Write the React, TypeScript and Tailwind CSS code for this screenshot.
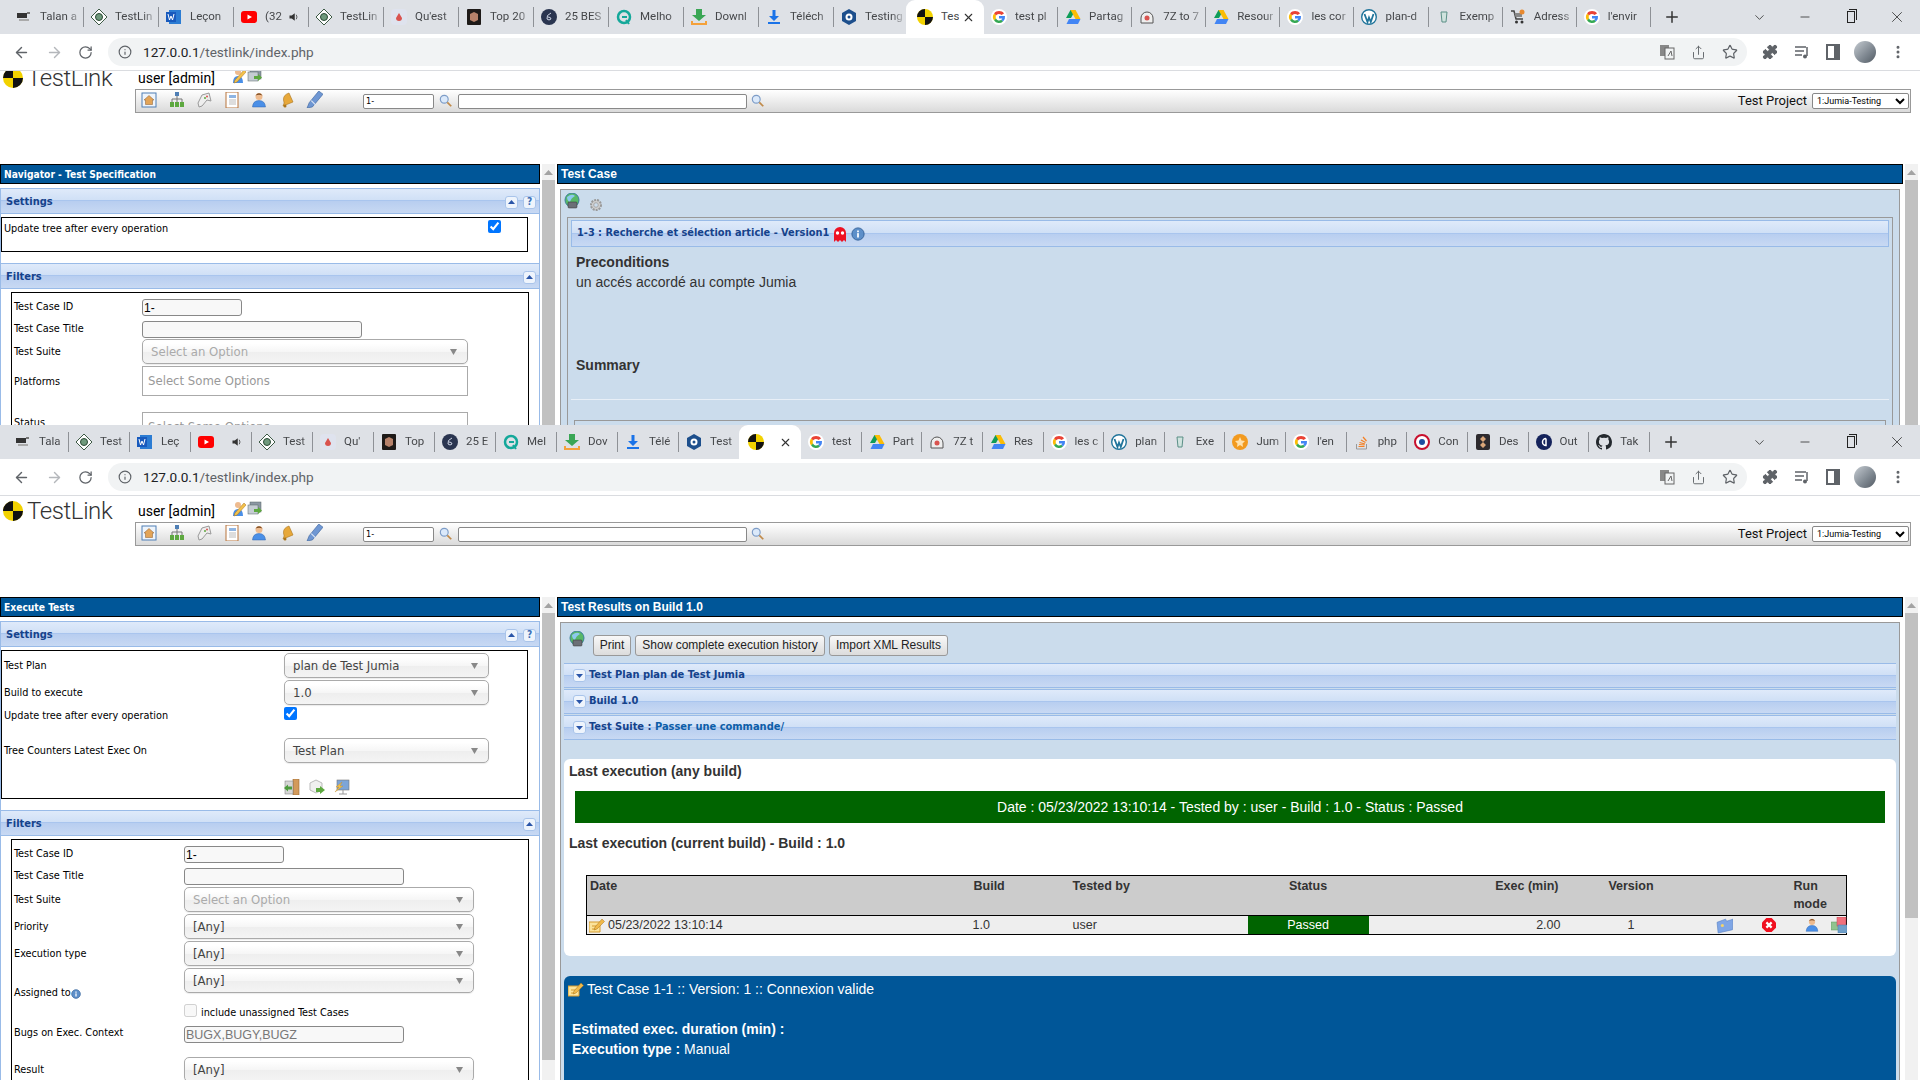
import React from 'react';
import { ArrowLeft, ArrowRight, RotateCw, Info, Star, Puzzle, Plus, X, Minus, Share, ChevronDown, MoreVertical } from 'lucide-react';

const TAHOMA = "font-['DejaVu_Sans_Condensed','DejaVu_Sans',sans-serif]";
const ARIAL = "font-['Liberation_Sans',Arial,sans-serif]";
const HEADER_BG = 'bg-[linear-gradient(#dfeafa_0%,#d0e0f6_46%,#a9c5ee_47%,#a9c5ee_50%,#b8cef0_52%,#c8d9f3_100%)]';

const Svg: React.FC<{ children: React.ReactNode; s?: number; className?: string }> = ({ children, s = 16, className }) => (
  <svg viewBox="0 0 16 16" width={s} height={s} className={`shrink-0 ${className ?? ''}`}>
    {children}
  </svg>
);

const Dummy = ({ s = 16 }: { s?: number }) => (
  <Svg s={s}>
    <circle cx="8" cy="8" r="8" fill="#f2d200" />
    <path d="M8 0A8 8 0 0 0 0 8H8ZM8 16A8 8 0 0 0 16 8H8Z" fill="#111" />
  </Svg>
);
const Talan = () => (
  <Svg>
    <rect x="1" y="4" width="10" height="5" fill="#333" />
    <rect x="11" y="3" width="3" height="2" fill="#777" />
    <rect x="3" y="10" width="10" height="2" fill="#aaa" />
  </Svg>
);
const Diamond = () => (
  <Svg>
    <path d="M8 0 16 8 8 16 0 8Z" fill="#fff" stroke="#3d5a45" strokeWidth="1" />
    <circle cx="8" cy="8" r="3.5" fill="#6f9a7c" stroke="#2b4a35" />
  </Svg>
);
const Word = () => (
  <Svg>
    <rect x="3" y="1" width="12" height="14" fill="#2b7cd3" />
    <rect x="0" y="3" width="10" height="10" fill="#185abd" />
    <path d="M2 5 3.5 11 5 7 6.500 11 8 5" fill="none" stroke="#fff" strokeWidth="1" />
  </Svg>
);
const Youtube = () => (
  <Svg>
    <rect x="0" y="2" width="16" height="12" rx="3" fill="#f00" />
    <path d="M6.500 5.500 11 8 6.500 10.500Z" fill="#fff" />
  </Svg>
);
const Speaker = () => (
  <Svg s={12}>
    <path d="M2 6H5L9 3V13L5 10H2Z" fill="#333" />
    <path d="M11 5Q13 8 11 11" stroke="#333" fill="none" />
  </Svg>
);
const Quest = () => (
  <Svg>
    <rect width="16" height="16" rx="4" fill="#dfe3ee" />
    <path d="M8 4 11 9A3 3 0 0 1 5 9Z" fill="#d9534f" />
  </Svg>
);
const TopBox = () => (
  <Svg>
    <rect x="1" width="14" height="16" rx="1" fill="#1e1a18" />
    <path d="M8 3 12 5V11L8 13 4 11V5Z" fill="#b7826a" />
  </Svg>
);
const DarkC = () => (
  <Svg>
    <circle cx="8" cy="8" r="8" fill="#2a3550" />
    <path d="M10 4Q5 6 6 10 8 12 10 10 10 8 7 8" stroke="#cfd6e6" fill="none" />
  </Svg>
);
const Melho = () => (
  <Svg>
    <circle cx="8" cy="8" r="6" fill="none" stroke="#14a89a" strokeWidth="2.500" />
    <path d="M6 8H11M10 11 13 15" stroke="#14a89a" strokeWidth="2" />
  </Svg>
);
const Downl = () => (
  <Svg>
    <path d="M5 0H11V6H15L8 12 1 6H5Z" fill="#3aa655" />
    <path d="M1 12V15H15V12" stroke="#f4a13a" strokeWidth="2" fill="none" />
  </Svg>
);
const Telech = () => (
  <Svg>
    <path d="M6.500 1H9.500V7H13L8 12 3 7H6.500Z" fill="#1a73e8" />
    <rect x="2" y="13" width="12" height="2" fill="#1a73e8" />
  </Svg>
);
const BlueRing = () => (
  <Svg>
    <path d="M8 0 15 4V12L8 16 1 12V4Z" fill="#1d4f8c" />
    <circle cx="8" cy="8" r="3.500" fill="#fff" />
    <circle cx="8" cy="8" r="1.500" fill="#1d4f8c" />
  </Svg>
);
const Google = () => (
  <Svg>
    <circle cx="8" cy="8" r="8" fill="#fff" />
    <path d="M13 4.500A6 6 0 0 0 3.100 4.500L5 6.500A3.500 3.500 0 0 1 10.500 6Z" fill="#ea4335" />
    <path d="M3.100 4.500A6 6 0 0 0 3.100 11.500L5 9.500A3.500 3.500 0 0 1 5 6.500Z" fill="#fbbc05" />
    <path d="M3.100 11.500A6 6 0 0 0 12 12.500L10.300 10.800A3.500 3.500 0 0 1 5 9.500Z" fill="#34a853" />
    <path d="M14 7H8V9.500H11.300A3 3 0 0 1 10.300 10.800L12 12.500A6 6 0 0 0 14 7Z" fill="#4285f4" />
  </Svg>
);
const Drive = () => (
  <Svg>
    <path d="M5.500 1H10.500L6 9H1Z" fill="#0f9d58" />
    <path d="M10.500 1 15.500 10H10.500L5.500 1Z" fill="#fbbc05" />
    <path d="M4 10H15.500L13 15H1.500Z" fill="#4285f4" />
  </Svg>
);
const Seven = () => (
  <Svg>
    <path d="M2 14V9A6 6 0 0 1 14 9V14Z" fill="#eee" stroke="#555" />
    <circle cx="8" cy="9" r="2.500" fill="#d9534f" />
  </Svg>
);
const Wp = () => (
  <Svg>
    <circle cx="8" cy="8" r="7.300" fill="#fff" stroke="#21759b" strokeWidth="1.400" />
    <path d="M3.500 5 6.500 13 8 8.500 9.800 13 12.500 5" stroke="#21759b" strokeWidth="1.800" fill="none" />
  </Svg>
);
const Tiny = () => (
  <Svg>
    <path d="M5 3H11L10 13H6Z" fill="#cfe3de" stroke="#5a8f86" />
  </Svg>
);
const Cart = () => (
  <Svg>
    <path d="M1 2H4L6 10H13" stroke="#444" strokeWidth="1.500" fill="none" />
    <path d="M4.500 4H12V8H5.500Z" fill="#888" />
    <circle cx="12" cy="3" r="2.500" fill="#e8892f" />
    <circle cx="6.500" cy="13" r="1.500" fill="#333" />
    <circle cx="12" cy="13" r="1.500" fill="#333" />
  </Svg>
);
const OrangeStar = () => (
  <Svg>
    <circle cx="8" cy="8" r="8" fill="#f29a1f" />
    <path d="M8 3 9.500 6.500 13 7 10.500 9.500 11 13 8 11 5 13 5.500 9.500 3 7 6.500 6.500Z" fill="#ffe2ae" />
  </Svg>
);
const StackO = () => (
  <Svg>
    <path d="M2.500 10V15H12.500V10" stroke="#999" fill="none" />
    <path d="M4.500 12.500H10.500M5 10.500 10.500 11M5.500 8.500 11 10M7 6 11.500 8.500M9 3 12.500 7" stroke="#f48024" strokeWidth="1.200" />
  </Svg>
);
const Target = () => (
  <Svg>
    <circle cx="8" cy="8" r="7" fill="#fff" stroke="#c8102e" strokeWidth="2" />
    <circle cx="8" cy="8" r="3" fill="#1f4ea1" />
  </Svg>
);
const DarkSq = () => (
  <Svg>
    <rect x="1" width="14" height="16" rx="2" fill="#2d2a2e" />
    <path d="M8 2 11 5 8 8 5 5ZM8 8 11 11 8 14 5 11Z" fill="#d9a679" />
  </Svg>
);
const NavyC = () => (
  <Svg>
    <circle cx="8" cy="8" r="8" fill="#14225b" />
    <path d="M10 4.500A3.500 3.500 0 1 0 10 11.500V4.500" stroke="#fff" strokeWidth="1.500" fill="none" />
  </Svg>
);
const GitHub = () => (
  <Svg>
    <path
      d="M8 0C3.600 0 0 3.600 0 8c0 3.500 2.300 6.500 5.500 7.600.4.100.5-.2.500-.4v-1.400c-2.200.5-2.700-1-2.700-1-.4-.9-.9-1.200-.9-1.200-.7-.5.100-.5.100-.5.800.1 1.200.8 1.200.8.700 1.200 1.900.9 2.300.7.100-.5.300-.9.500-1.100-1.800-.2-3.600-.9-3.600-4 0-.9.300-1.600.8-2.100-.1-.2-.4-1 .1-2.100 0 0 .7-.2 2.200.8a7.500 7.500 0 0 1 4 0c1.500-1 2.200-.8 2.200-.8.400 1.100.2 1.900.1 2.100.5.600.8 1.300.8 2.100 0 3.100-1.900 3.700-3.700 3.900.3.300.6.700.6 1.500v2.200c0 .2.100.5.600.4A8 8 0 0 0 16 8c0-4.400-3.600-8-8-8Z"
      fill="#24292e"
    />
  </Svg>
);

const FAVICONS: Record<string, React.ReactNode> = {
  talan: <Talan />, diamond: <Diamond />, word: <Word />, yt: <Youtube />, quest: <Quest />, top: <TopBox />,
  dark: <DarkC />, melho: <Melho />, downl: <Downl />, telech: <Telech />, ring: <BlueRing />, g: <Google />,
  drive: <Drive />, seven: <Seven />, wp: <Wp />, tiny: <Tiny />, cart: <Cart />, star: <OrangeStar />,
  so: <StackO />, target: <Target />, darksq: <DarkSq />, navy: <NavyC />, gh: <GitHub />,
};

// page artwork, roughly the old TestLink icon set
const HomeIcon = () => (
  <Svg>
    <rect x="1" y="1" width="14" height="14" fill="#eef4fb" stroke="#4f7fb5" />
    <path d="M3 8 8 3.500 13 8H11.500V12.500H4.500V8Z" fill="#e2a458" stroke="#8a5b2a" strokeWidth=".5" />
  </Svg>
);
const TreeIcon = () => (
  <Svg>
    <rect x="6" y="0" width="4" height="4" fill="#4f7fb5" />
    <path d="M8 4V7M3 10V7H13V10M8 7V10" stroke="#777" fill="none" />
    <rect x="1" y="10" width="4" height="5" fill="#5da83f" />
    <rect x="6" y="10" width="4" height="5" fill="#5da83f" />
    <rect x="11" y="10" width="4" height="5" fill="#5da83f" />
  </Svg>
);
const PadIcon = () => (
  <Svg>
    <path d="M2 11 6 3 13 1 15 9 11 8 6 14 3 15Z" fill="#eeeeee" stroke="#999" />
    <circle cx="11" cy="4.500" r="1" fill="#d9534f" />
    <circle cx="9" cy="6" r="1" fill="#5da83f" />
  </Svg>
);
const BookIcon = () => (
  <Svg>
    <rect x="2" y="0" width="12" height="16" fill="#fff" stroke="#b8743c" />
    <rect x="5" y="3" width="7" height="3" fill="#8fb5e3" />
    <path d="M5 8H12M5 10H12M5 12H12" stroke="#bbb" />
  </Svg>
);
const UserIcon = () => (
  <Svg>
    <circle cx="8" cy="4.500" r="3.500" fill="#eebb8f" />
    <path d="M4.500 3.500Q8 -1 11.500 3.500Q8 2 4.500 3.500Z" fill="#7a4a22" />
    <path d="M1.500 15Q2 8.500 8 8.500T14.500 15Z" fill="#4a8fe7" stroke="#2c62ad" strokeWidth=".5" />
  </Svg>
);
const BellIcon = () => (
  <Svg>
    <path d="M10 1 14 10 4 14Q6 11 4.500 8 4 3 10 1Z" fill="#e7a83a" stroke="#a9741c" strokeWidth=".6" />
    <circle cx="6" cy="14" r="1.500" fill="#a9741c" />
  </Svg>
);
const PenIcon = () => (
  <Svg s={17}>
    <path d="M12 0 16 3 6 15 1 16 3 11Z" fill="#6f97d3" stroke="#3d659f" strokeWidth=".6" />
    <path d="M5 9 9 13" stroke="#dce7f6" />
  </Svg>
);
const Magnifier = () => (
  <Svg s={14}>
    <circle cx="6" cy="6" r="4.500" fill="#dbe9fa" stroke="#7d9cc7" strokeWidth="1.300" />
    <path d="M9.500 9.500 14 14" stroke="#c08a4a" strokeWidth="2" />
  </Svg>
);
const EditUser = () => (
  <Svg>
    <circle cx="7" cy="4" r="3" fill="#eebb8f" />
    <path d="M2 15Q2 8 7 8T12 15Z" fill="#4a8fe7" />
    <path d="M13 2 15 4 6 14 3 15 4 12Z" fill="#f3c14b" stroke="#a9741c" strokeWidth=".5" />
  </Svg>
);
const Screens = () => (
  <Svg>
    <rect x="3" y="1" width="11" height="10" fill="#8c97a3" stroke="#566" strokeWidth=".5" />
    <rect x="1" y="4" width="10" height="9" fill="#c5ccd3" stroke="#566" strokeWidth=".5" />
    <path d="M7 8H11V6L15 9.500 11 13V11H7Z" fill="#5da83f" />
  </Svg>
);
const Globe = () => (
  <Svg>
    <circle cx="8" cy="7" r="7" fill="#58b868" stroke="#3a7f9c" />
    <path d="M3 4Q8 0 11 3 7 5 6 9 3 8 3 4Z" fill="#8cc9ee" />
    <rect x="4" y="9" width="9" height="6" rx="1" fill="#6b6f76" stroke="#333" strokeWidth=".5" />
  </Svg>
);
const Gear = () => (
  <Svg>
    <circle cx="8" cy="8" r="5" fill="#cfcfcf" stroke="#999" strokeWidth="2" strokeDasharray="2 1" />
    <circle cx="8" cy="8" r="2.300" fill="#cbdcec" stroke="#aaa" />
  </Svg>
);
const Ghost = () => (
  <Svg>
    <path d="M2 16V7A6 6 0 0 1 14 7V16L12 14 10 16 8 14 6 16 4 14Z" fill="#ee1122" />
    <circle cx="5.500" cy="7" r="1.700" fill="#fff" />
    <circle cx="10.500" cy="7" r="1.700" fill="#fff" />
  </Svg>
);
const InfoDot = ({ s = 14 }: { s?: number }) => (
  <Svg s={s}>
    <circle cx="8" cy="8" r="7" fill="#5d8fc9" stroke="#2f5e96" />
    <rect x="7" y="7" width="2" height="5" fill="#fff" />
    <rect x="7" y="4" width="2" height="2" fill="#fff" />
  </Svg>
);
const DoorIcon = () => (
  <Svg>
    <rect x="9" y="0" width="6" height="16" fill="#d39a5b" stroke="#9a6a33" strokeWidth=".6" />
    <rect x="1" y="2" width="8" height="13" fill="#d6d6d6" stroke="#777" strokeWidth=".5" />
    <path d="M0 9 4 5.500V7.500H8V10.500H4V12.500Z" fill="#4e9c3e" />
  </Svg>
);
const BoxArrow = () => (
  <Svg>
    <path d="M1 4 7 1 13 4V11L7 14 1 11Z" fill="#f0f0f0" stroke="#bbb" />
    <path d="M7 9H11V7L16 11 11 15V13H7Z" fill="#5da83f" />
  </Svg>
);
const ScreenBolt = () => (
  <Svg>
    <rect x="3" y="1" width="12" height="10" fill="#7da5d8" stroke="#777" strokeWidth=".6" />
    <path d="M5 15H13M9 11V15" stroke="#999" />
    <path d="M8 3 2 8H5L1 13 9 7H6Z" fill="#f3c14b" stroke="#c08a2a" strokeWidth=".4" />
  </Svg>
);
const PencilDoc = () => (
  <Svg>
    <path d="M0 5H11V15H0Z" fill="#fbe39b" stroke="#d69b2c" />
    <path d="M3 9H8M3 12H7" stroke="#d69b2c" />
    <path d="M13 2 15.500 4.500 8 12 5 13 6 10Z" fill="#f0b94a" stroke="#a9741c" strokeWidth=".5" />
  </Svg>
);
const Folder = () => (
  <Svg s={17}>
    <path d="M1 5 9 2 10 4 16 2 15.500 12 2 15Z" fill="#7fa6e6" stroke="#5a82c4" strokeWidth=".6" />
    <circle cx="6" cy="8" r="1.500" fill="#f3d36b" />
  </Svg>
);
const RedX = () => (
  <Svg s={14}>
    <path d="M5 0H11L16 5V11L11 16H5L0 11V5Z" fill="#f01020" />
    <path d="M5 5 11 11M11 5 5 11" stroke="#fff" strokeWidth="2.500" />
  </Svg>
);
const Cubes = () => (
  <Svg>
    <rect x="0" y="5" width="8" height="8" fill="#8fc48f" stroke="#5d965d" strokeWidth=".5" />
    <rect x="6" y="0" width="9" height="9" fill="#f0707c" stroke="#c04a55" strokeWidth=".5" />
    <rect x="7" y="8" width="9" height="8" fill="#6f9fca" stroke="#4a7ba6" strokeWidth=".5" />
  </Svg>
);

type TabData = { icon: string; label: string; sound?: boolean };

const Tab: React.FC<{ tab: TabData; width: string; sep?: boolean }> = ({ tab, width, sep = true }) => (
  <div className={`${width} h-[34px] shrink-0 flex items-center`}>
    <div className={`w-full h-[20px] flex items-center pl-[7px] overflow-hidden ${sep ? 'border-r border-[#8e9196]' : ''}`}>
      {FAVICONS[tab.icon]}
      <span className="ml-[8px] flex-1 min-w-0 whitespace-nowrap overflow-hidden text-[11.500px] text-[#45474a] [mask-image:linear-gradient(90deg,#000_65%,transparent_100%)]">
        {tab.label}
      </span>
      {tab.sound && <span className="mr-[8px]"><Speaker /></span>}
    </div>
  </div>
);

const ActiveTab: React.FC<{ width: string; label: string; pad: string }> = ({ width, label, pad }) => (
  <div className={`${width} ${pad} h-[34px] shrink-0 bg-white rounded-t-[9px] flex items-center`}>
    <Dummy />
    <span className="ml-[8px] max-w-[22px] overflow-hidden whitespace-nowrap text-[11.500px] text-[#45474a]">{label}</span>
    <X size={13} strokeWidth={2} className="ml-auto mr-[9px] text-[#333]" />
  </div>
);

const Chrome: React.FC<{ before: TabData[]; after: TabData[]; tabW: string; activeW: string; activeLabel: string; activePad: string; lead: string; lastBeforeW: string; afterW: string }> = ({
  before, after, tabW, activeW, activeLabel, activePad, lead, lastBeforeW, afterW,
}) => (
  <div className="font-['Roboto',sans-serif]">
    <div className={`h-[34px] bg-[#dee1e6] flex ${lead}`}>
      {before.map((t, i) =>
        i === before.length - 1 ? (
          <Tab key={i} tab={t} width={lastBeforeW} sep={false} />
        ) : (
          <Tab key={i} tab={t} width={tabW} />
        ),
      )}
      <ActiveTab width={activeW} label={activeLabel} pad={activePad} />
      {after.map((t, i) => (
        <Tab key={i} tab={t} width={afterW} />
      ))}
      <div className="ml-[7px] w-[28px] flex items-center justify-center">
        <Plus size={18} strokeWidth={2} className="text-[#333]" />
      </div>
      <div className="ml-auto flex text-[#222]">
        <div className="w-[46px] flex items-center justify-center"><ChevronDown size={15} strokeWidth={1.2} /></div>
        <div className="w-[46px] flex items-center justify-center"><Minus size={14} strokeWidth={1.3} /></div>
        <div className="w-[46px] flex items-center justify-center">
          <div className="relative w-[8px] h-[12px] border border-[#222]">
            <div className="absolute -top-[3px] left-[1px] w-[8px] h-[11px] border-t border-r border-[#222]" />
          </div>
        </div>
        <div className="w-[46px] flex items-center justify-center"><X size={18} strokeWidth={1} /></div>
      </div>
    </div>
    <div className="h-[37px] bg-white border-b border-[#dadce0] flex items-center text-[#5f6368]">
      <div className="w-[34px] ml-[4px] flex justify-center"><ArrowLeft size={17} strokeWidth={2} /></div>
      <div className="w-[33px] flex justify-center text-[#b4b7bb]"><ArrowRight size={17} strokeWidth={2} /></div>
      <div className="w-[29px] flex justify-center"><RotateCw size={15} strokeWidth={2} /></div>
      <div className="ml-[8px] w-[1639px] h-[28px] rounded-full bg-[#f1f3f4] flex items-center">
        <Info size={14} strokeWidth={2} className="ml-[10px]" />
        <span className="ml-[11px] text-[13.600px] text-[#202124]">
          127.0.0.1<span className="text-[#5f6368]">/testlink/index.php</span>
        </span>
        <div className="ml-auto flex items-center gap-[16px] mr-[9px]">
          <svg viewBox="0 0 16 16" width="16" height="16">
            <rect x="1" y="1" width="9" height="11" fill="#888" />
            <rect x="6" y="4" width="9" height="11" fill="#f1f3f4" stroke="#666" />
            <path d="M9 12 12 7 13 12" stroke="#666" fill="none" />
          </svg>
          <Share size={15} strokeWidth={1.5} />
          <Star size={16} strokeWidth={1.8} />
        </div>
      </div>
      <div className="ml-[15px] flex items-center">
        <Puzzle size={16} fill="#5f6368" strokeWidth={1.5} />
        <svg viewBox="0 0 16 16" width="16" height="16" className="ml-[16px]">
          <path d="M1 3H12M1 7H10M1 11H8" stroke="#5f6368" strokeWidth="1.500" />
          <path d="M13 3V12" stroke="#5f6368" strokeWidth="1.500" />
          <circle cx="11" cy="12.500" r="2" fill="#5f6368" />
        </svg>
        <div className="ml-[16px] w-[14px] h-[16px] border-[2px] border-[#5f6368] border-r-[6px]" />
        <div className="ml-[14px] w-[22px] h-[22px] rounded-full bg-[linear-gradient(135deg,#c6ccd2,#7d868f_60%,#525a63)]" />
        <MoreVertical size={16} strokeWidth={2.5} className="ml-[14px]" />
      </div>
    </div>
  </div>
);

const PageHeader = () => (
  <div className={`h-[101px] ${TAHOMA}`}>
    <div className="h-[26px] pt-[4px] flex items-center">
      <span className="ml-[3px]"><Dummy s={20} /></span>
      <span className="ml-[4px] w-[111px] font-['Roboto',sans-serif] font-light text-[24px] leading-none text-[#333] tracking-[-0.4px]">TestLink</span>
      <span className="w-[93px] font-['Roboto',sans-serif] text-[14px] text-black whitespace-nowrap">user [admin]</span>
      <span className="-mt-[4px] flex">
        <EditUser />
        <Screens />
      </span>
    </div>
    <div className="ml-[135px] mr-[9px] h-[24px] border border-[#999] bg-[linear-gradient(#fff,#f4f4f4_30%,#dadada)] flex items-center">
      <div className="-mt-[3px] flex items-center gap-[11.500px] pl-[5px] w-[227px]">
        <HomeIcon />
        <TreeIcon />
        <PadIcon />
        <BookIcon />
        <UserIcon />
        <BellIcon />
        <PenIcon />
      </div>
      <input readOnly value="1-" className="w-[71px] h-[15px] rounded-[2px] border border-[#888] bg-white px-[2px] text-[9px] leading-none" />
      <span className="ml-[5px]"><Magnifier /></span>
      <input readOnly className="ml-[5px] w-[289px] h-[15px] rounded-[2px] border border-[#888] bg-white" />
      <span className="ml-[4px]"><Magnifier /></span>
      <span className="ml-auto font-['Roboto',sans-serif] text-[13px] text-[#111]">Test Project</span>
      <select className="ml-[5px] mr-[1px] w-[97px] h-[16px] rounded-[2px] border border-[#888] bg-white text-[9px] font-['Roboto',sans-serif] text-black">
        <option>1:Jumia-Testing</option>
      </select>
    </div>
  </div>
);

const TitleBar: React.FC<{ text: string; className?: string }> = ({ text, className }) => (
  <div className={`h-[20px] bg-[#005698] border border-black flex items-center pl-[3px] text-white font-bold ${className ?? ''}`}>{text}</div>
);

const ToggleBtn: React.FC<{ dir?: 'up' | 'down'; label?: string }> = ({ dir = 'up', label }) => (
  <div className="w-[13px] h-[13px] rounded-[3px] bg-[#eef4fc] border border-[#a9c4ea] flex items-center justify-center shrink-0">
    {label ? (
      <span className="text-[10px] leading-none font-bold text-[#3a6db5]">{label}</span>
    ) : (
      <svg width="7" height="4" viewBox="0 0 7 4">
        <path d={dir === 'up' ? 'M0 4 3.500 0 7 4Z' : 'M0 0 3.500 4 7 0Z'} fill="#2a55a8" />
      </svg>
    )}
  </div>
);

const PanelHeader: React.FC<{ text: string; help?: boolean; className?: string }> = ({ text, help, className }) => (
  <div className={`h-[26px] pt-[2px] ${HEADER_BG} border-y border-[#99bbe8] flex items-center pl-[5px] pr-[3px] gap-[5px] ${className ?? ''}`}>
    <span className="mr-auto pt-[1px] text-[11px] font-bold text-[#15428b]">{text}</span>
    <ToggleBtn />
    {help && <ToggleBtn label="?" />}
  </div>
);

const Chosen: React.FC<{ text: string; muted?: boolean; width: string; className?: string }> = ({ text, muted, width, className }) => (
  <div className={`${width} h-[25px] rounded-[5px] border border-[#aaa] bg-[linear-gradient(#fff_15%,#f6f6f6_50%,#eeeeee_52%,#f4f4f4)] shadow-[0_1px_1px_rgba(0,0,0,0.08)] flex items-center pl-[8px] pr-[10px] text-[13px] shrink-0 ${muted ? 'text-[#aaa]' : 'text-[#444]'} ${className ?? ''}`}>
    <span className="flex-1 whitespace-nowrap">{text}</span>
    <svg width="7" height="6" viewBox="0 0 7 6" className="shrink-0">
      <path d="M0 0H7L3.500 6Z" fill="#888" />
    </svg>
  </div>
);

const SmallInput: React.FC<{ value?: string; width: string; placeholder?: string; className?: string }> = ({ value, width, placeholder, className }) => (
  <input
    readOnly
    value={value ?? ''}
    placeholder={placeholder}
    className={`${width} h-[17px] rounded-[3px] border border-[#888] bg-[#f8f8f8] px-[1px] text-[12px] text-black placeholder:text-[#777] placeholder:text-[12.500px] ${ARIAL} ${className ?? ''}`}
  />
);

const MultiBox: React.FC<{ text: string; className?: string }> = ({ text, className }) => (
  <div className={`w-[326px] h-[30px] border border-[#aaa] bg-white flex items-center pl-[5px] text-[13px] text-[#999] ${className ?? ''}`}>{text}</div>
);

const Label: React.FC<{ text: string; width: string; className?: string; children?: React.ReactNode }> = ({ text, width, className, children }) => (
  <div className={`${width} shrink-0 flex items-center whitespace-nowrap pt-[2px] text-[10.800px] text-black ${className ?? ''}`}>
    {text}
    {children}
  </div>
);

const ScrollBar: React.FC<{ thumb: string; className?: string }> = ({ thumb, className }) => (
  <div className={`w-[13px] h-full shrink-0 bg-[#f1f1f1] ${className ?? ''}`}>
    <div className="h-[16px] flex items-center justify-center">
      <svg width="9" height="5" viewBox="0 0 9 5">
        <path d="M0 5 4.500 0 9 5Z" fill="#a3a3a3" />
      </svg>
    </div>
    <div className={`${thumb} bg-[#c1c1c1]`} />
  </div>
);

const Navigator = () => (
  <>
    <TitleBar text="Navigator - Test Specification" className="pt-[1px] text-[10.200px]" />
    <div className="mt-[4px] border-x border-[#99bbe8] h-[300px]">
      <PanelHeader text="Settings" help />
      <div className="mt-[3px] w-[527px] h-[35px] border border-black flex items-start">
        <Label text="Update tree after every operation" width="w-[486px]" className="pl-[2px] h-[20px]" />
        <input type="checkbox" defaultChecked readOnly className="mt-[2px] w-[13px] h-[13px] m-0" />
      </div>
      <PanelHeader text="Filters" className="mt-[11px]" />
      <div className="mt-[3px] ml-[10px] w-[518px] h-[200px] border border-black">
        <div className="mt-[6px] flex items-start">
          <Label text="Test Case ID" width="w-[130px]" className="pl-[2px] h-[14px]" />
          <SmallInput value="1-" width="w-[100px]" />
        </div>
        <div className="mt-[5px] flex items-start">
          <Label text="Test Case Title" width="w-[130px]" className="pl-[2px] h-[14px]" />
          <SmallInput width="w-[220px]" />
        </div>
        <div className="mt-[1px] flex items-center">
          <Label text="Test Suite" width="w-[130px]" className="pl-[2px]" />
          <Chosen text="Select an Option" muted width="w-[326px]" />
        </div>
        <div className="mt-[2px] flex items-center">
          <Label text="Platforms" width="w-[130px]" className="pl-[2px]" />
          <MultiBox text="Select Some Options" />
        </div>
        <div className="mt-[16px] flex items-start">
          <Label text="Status" width="w-[130px]" className="pl-[2px] h-[20px]" />
          <MultiBox text="Select Some Options" />
        </div>
      </div>
    </div>
  </>
);

const ExecNavigator = () => (
  <>
    <TitleBar text="Execute Tests" className="pt-[1px] text-[10.200px]" />
    <div className="mt-[4px] border-x border-[#99bbe8] h-[470px]">
      <PanelHeader text="Settings" help />
      <div className="mt-[3px] w-[527px] h-[149px] border border-black pt-[2px]">
        <div className="flex items-center">
          <Label text="Test Plan" width="w-[282px]" className="pl-[2px]" />
          <Chosen text="plan de Test Jumia" width="w-[205px]" />
        </div>
        <div className="mt-[2px] flex items-center">
          <Label text="Build to execute" width="w-[282px]" className="pl-[2px]" />
          <Chosen text="1.0" width="w-[205px]" />
        </div>
        <div className="mt-[2px] flex items-start h-[31px]">
          <Label text="Update tree after every operation" width="w-[282px]" className="pl-[2px] h-[17px]" />
          <input type="checkbox" defaultChecked readOnly className="w-[13px] h-[13px] m-0" />
        </div>
        <div className="flex items-center">
          <Label text="Tree Counters Latest Exec On" width="w-[282px]" className="pl-[2px]" />
          <Chosen text="Test Plan" width="w-[205px]" />
        </div>
        <div className="mt-[16px] pl-[282px] flex gap-[9px]">
          <DoorIcon />
          <BoxArrow />
          <ScreenBolt />
        </div>
      </div>
      <PanelHeader text="Filters" className="mt-[11px]" />
      <div className="mt-[3px] ml-[10px] w-[518px] h-[260px] border border-black">
        <div className="mt-[6px] flex items-start">
          <Label text="Test Case ID" width="w-[172px]" className="pl-[2px] h-[15px]" />
          <SmallInput value="1-" width="w-[100px]" />
        </div>
        <div className="mt-[5px] flex items-start">
          <Label text="Test Case Title" width="w-[172px]" className="pl-[2px] h-[15px]" />
          <SmallInput width="w-[220px]" />
        </div>
        <div className="mt-[2px] flex items-center">
          <Label text="Test Suite" width="w-[172px]" className="pl-[2px]" />
          <Chosen text="Select an Option" muted width="w-[290px]" />
        </div>
        <div className="mt-[2px] flex items-center">
          <Label text="Priority" width="w-[172px]" className="pl-[2px]" />
          <Chosen text="[Any]" width="w-[290px]" />
        </div>
        <div className="mt-[2px] flex items-center">
          <Label text="Execution type" width="w-[172px]" className="pl-[2px]" />
          <Chosen text="[Any]" width="w-[290px]" />
        </div>
        <div className="mt-[2px] flex items-center">
          <Label text="Assigned to" width="w-[172px]" className="pl-[2px]">
            <InfoDot s={10} />
          </Label>
          <div>
            <Chosen text="[Any]" width="w-[290px]" />
            <div className="mt-[11px] h-[13px] flex items-start gap-[4px] text-[10.800px] leading-[13px] text-black">
              <input type="checkbox" disabled className="w-[13px] h-[13px] m-0" />
              <span className="mt-[2px]">include unassigned Test Cases</span>
            </div>
          </div>
        </div>
        <div className="mt-[9px] flex items-start">
          <Label text="Bugs on Exec. Context" width="w-[172px]" className="pl-[2px] h-[13px]" />
          <SmallInput placeholder="BUGX,BUGY,BUGZ" width="w-[220px]" />
        </div>
        <div className="mt-[14px] flex items-center">
          <Label text="Result" width="w-[172px]" className="pl-[2px]" />
          <Chosen text="[Any]" width="w-[290px]" />
        </div>
      </div>
    </div>
  </>
);

const RightPanelWrap: React.FC<{ title: string; children: React.ReactNode }> = ({ title, children }) => (
  <>
    <TitleBar text={title} className={`text-[12px] ${ARIAL}`} />
    <div className={`mt-[5px] ml-[3px] w-[1340px] border border-[#999] bg-[#cbdcec] ${ARIAL} text-[#333] h-[600px]`}>{children}</div>
  </>
);

const TestCasePanel = () => (
  <RightPanelWrap title="Test Case">
    <div className="h-[27px] pl-[3px] pt-[3px] flex items-start gap-[8px]">
      <Globe />
      <span className="mt-[4px]"><Gear /></span>
    </div>
    <div className="mx-[6px] border border-[#999] px-[3px] pt-[2px] h-[400px]">
      <div className={`h-[27px] ${HEADER_BG} border border-[#99bbe8] flex items-center pl-[5px] gap-[3px] text-[10.900px] font-bold text-[#15428b] ${TAHOMA}`}>
        1-3 : Recherche et sélection article - Version1
        <Ghost />
        <InfoDot />
      </div>
      <div className="pl-[5px] text-[14px] leading-[20px]">
        <div className="mt-[5px] font-bold">Preconditions</div>
        <div>un accés accordé au compte Jumia</div>
        <div className="mt-[63px] font-bold">Summary</div>
      </div>
      <div className="mt-[24px] h-px bg-[#e8eff7]" />
      <div className="mt-[20px] mx-[3px] h-[40px] border border-[#999]" />
    </div>
  </RightPanelWrap>
);

const AccordionRow: React.FC<{ children: React.ReactNode; className?: string }> = ({ children, className }) => (
  <div className={`mx-[3px] h-[25px] ${HEADER_BG} border-y border-[#99bbe8] flex items-center pl-[9px] gap-[3px] text-[11px] font-bold text-[#15428b] ${TAHOMA} ${className ?? ''}`}>
    <ToggleBtn dir="down" />
    <span>{children}</span>
  </div>
);

const Btn: React.FC<{ text: string; width: string }> = ({ text, width }) => (
  <button className={`${width} h-[21px] rounded-[3px] border border-[#999] bg-[linear-gradient(#f8f8f8,#dcdcdc)] text-[12px] leading-[17px] text-[#222]`}>{text}</button>
);

const ResultsPanel = () => (
  <RightPanelWrap title="Test Results on Build 1.0">
    <div className="h-[40px] pl-[8px] flex items-start">
      <span className="mt-[8px]"><Globe /></span>
      <div className="ml-[8px] mt-[12px] flex gap-[4px]">
        <Btn text="Print" width="w-[38px]" />
        <Btn text="Show complete execution history" width="w-[190px]" />
        <Btn text="Import XML Results" width="w-[119px]" />
      </div>
    </div>
    <AccordionRow>Test Plan plan de Test Jumia</AccordionRow>
    <AccordionRow className="mt-[1px]">Build 1.0</AccordionRow>
    <AccordionRow className="mt-[1px]">
      Test Suite : <span className="text-[#0d5ea8]">Passer une commande/</span>
    </AccordionRow>
    <div className="mx-[3px] mt-[19px] h-[197px] bg-white rounded-[6px] overflow-hidden">
      <div className="pl-[5px] pt-[3px] text-[14px] leading-[18px] font-bold">Last execution (any build)</div>
      <div className="mt-[11px] ml-[11px] w-[1310px] h-[32px] bg-[#006400] text-white text-[14px] flex items-center justify-center">
        Date : 05/23/2022 13:10:14 - Tested by : user - Build : 1.0 - Status : Passed
      </div>
      <div className="pl-[5px] mt-[11px] text-[14px] leading-[18px] font-bold">Last execution (current build) - Build : 1.0</div>
      <table className="mt-[23px] ml-[22px] w-[1260px] table-fixed border-collapse border border-black text-[12.500px] leading-[18px]">
        <colgroup>
          <col className="w-[385px]" />
          <col className="w-[99px]" />
          <col className="w-[177px]" />
          <col className="w-[121px]" />
          <col className="w-[194px]" />
          <col className="w-[137px]" />
          <col className="w-[48px]" />
          <col className="w-[42px]" />
          <col className="w-[57px]" />
        </colgroup>
        <thead>
          <tr className="h-[40px] bg-[#cccccc] border-b border-black align-top font-bold">
            <th className="pl-[3px] pt-[1px] text-left font-bold">Date</th>
            <th className="pl-[2px] pt-[1px] text-left font-bold">Build</th>
            <th className="pl-[2px] pt-[1px] text-left font-bold">Tested by</th>
            <th className="pt-[1px] text-center font-bold">Status</th>
            <th className="pr-[4px] pt-[1px] text-right font-bold">Exec (min)</th>
            <th className="pt-[1px] text-center font-bold">Version</th>
            <th />
            <th />
            <th className="pl-[4px] pt-[1px] text-left font-bold leading-[18px]">Run mode</th>
          </tr>
        </thead>
        <tbody>
          <tr className="h-[18px] bg-[#eeeeee]">
            <td className="pl-[2px]">
              <span className="flex items-center gap-[3px]"><PencilDoc />05/23/2022 13:10:14</span>
            </td>
            <td className="pl-[1px]">1.0</td>
            <td className="pl-[2px]">user</td>
            <td className="bg-[#006400] text-white text-center">Passed</td>
            <td className="pr-[2px] text-right">2.00</td>
            <td className="text-center">1</td>
            <td className="pl-[16px]"><Folder /></td>
            <td className="pl-[14px]"><RedX /></td>
            <td className="pl-[14px]">
              <span className="flex items-center gap-[11px]"><span className="scale-90"><UserIcon /></span><Cubes /></span>
            </td>
          </tr>
        </tbody>
      </table>
    </div>
    <div className="mx-[3px] mt-[20px] h-[200px] bg-[#005698] rounded-t-[6px] text-white text-[14px] leading-[20px] pt-[3px]">
      <div className="pl-[4px] flex items-center gap-[3px]"><PencilDoc />Test Case 1-1 :: Version: 1 :: Connexion valide</div>
      <div className="mt-[20px] pl-[8px] font-bold">Estimated exec. duration (min) :</div>
      <div className="pl-[8px]"><b>Execution type :</b> Manual</div>
    </div>
  </RightPanelWrap>
);

const Columns: React.FC<{ left: React.ReactNode; right: React.ReactNode; height: string; leftThumb: string; rightThumb: string }> = ({ left, right, height, leftThumb, rightThumb }) => (
  <div className={`flex ${height} overflow-hidden ${TAHOMA}`}>
    <div className="w-[540px] shrink-0">{left}</div>
    <ScrollBar thumb={leftThumb} className="ml-[2px]" />
    <div className="ml-[2px] w-[1346px] shrink-0">{right}</div>
    <ScrollBar thumb={rightThumb} className="ml-[2px]" />
  </div>
);

const tabsA: TabData[] = [
  { icon: 'talan', label: 'Talan a' }, { icon: 'diamond', label: 'TestLin' }, { icon: 'word', label: 'Leçon' },
  { icon: 'yt', label: '(32', sound: true }, { icon: 'diamond', label: 'TestLin' }, { icon: 'quest', label: "Qu'est" },
  { icon: 'top', label: 'Top 20' }, { icon: 'dark', label: '25 BES' }, { icon: 'melho', label: 'Melho' },
  { icon: 'downl', label: 'Downl' }, { icon: 'telech', label: 'Téléch' }, { icon: 'ring', label: 'Testing' },
];
const tabsAfterA: TabData[] = [
  { icon: 'g', label: 'test pl' }, { icon: 'drive', label: 'Partag' }, { icon: 'seven', label: '7Z to 7' },
  { icon: 'drive', label: 'Resour' }, { icon: 'g', label: 'les cor' }, { icon: 'wp', label: 'plan-d' },
  { icon: 'tiny', label: 'Exemp' }, { icon: 'cart', label: 'Adress' }, { icon: 'g', label: "l'envir" },
];
const tabsB: TabData[] = [
  { icon: 'talan', label: 'Tala' }, { icon: 'diamond', label: 'Test' }, { icon: 'word', label: 'Leç' },
  { icon: 'yt', label: '', sound: true }, { icon: 'diamond', label: 'Test' }, { icon: 'quest', label: "Qu'" },
  { icon: 'top', label: 'Top' }, { icon: 'dark', label: '25 E' }, { icon: 'melho', label: 'Mel' },
  { icon: 'downl', label: 'Dov' }, { icon: 'telech', label: 'Télé' }, { icon: 'ring', label: 'Test' },
];
const tabsAfterB: TabData[] = [
  { icon: 'g', label: 'test' }, { icon: 'drive', label: 'Part' }, { icon: 'seven', label: '7Z t' },
  { icon: 'drive', label: 'Res' }, { icon: 'g', label: 'les c' }, { icon: 'wp', label: 'plan' },
  { icon: 'tiny', label: 'Exe' }, { icon: 'star', label: 'Jum' }, { icon: 'g', label: "l'en" },
  { icon: 'so', label: 'php' }, { icon: 'target', label: 'Con' }, { icon: 'darksq', label: 'Des' },
  { icon: 'navy', label: 'Out' }, { icon: 'gh', label: 'Tak' },
];

export default function App() {
  return (
    <div className="w-[1920px] h-[1080px] overflow-hidden bg-white">
      <section className="h-[425px] overflow-hidden">
        <Chrome before={tabsA} after={tabsAfterA} tabW="w-[75px]" lastBeforeW="w-[72px]" activeW="w-[78px]" afterW="w-[74.100px]" activeLabel="Tes" activePad="pl-[11px]" lead="pl-[9px]" />
        <div className="h-[354px] overflow-hidden">
          <div className="-mt-[8px]">
            <PageHeader />
            <Columns left={<Navigator />} right={<TestCasePanel />} height="h-[261px]" leftThumb="h-[400px]" rightThumb="h-[400px]" />
          </div>
        </div>
      </section>
      <section className="h-[655px] overflow-hidden">
        <Chrome before={tabsB} after={tabsAfterB} tabW="w-[61px]" lastBeforeW="w-[60px]" activeW="w-[62px]" afterW="w-[60.640px]" activeLabel="" activePad="pl-[9px]" lead="pl-[8px]" />
        <PageHeader />
        <Columns left={<ExecNavigator />} right={<ResultsPanel />} height="h-[483px]" leftThumb="h-[447px]" rightThumb="h-[305px]" />
      </section>
    </div>
  );
}
